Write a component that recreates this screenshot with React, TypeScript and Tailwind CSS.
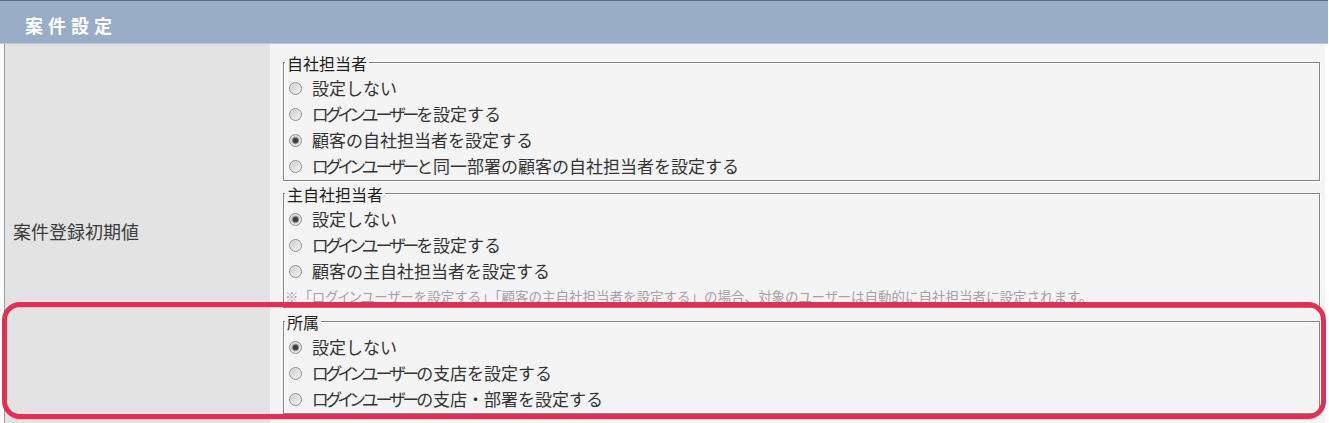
import React from 'react';

type Option = { label: string; checked?: boolean };
type Group = { legend: string; options: Option[]; note?: string; className: string };

// Meiryo-style narrow katakana: only the katakana runs get squeezed (not the ・ dot)
const kana = (text: string, tight: string) =>
    text.split(/([\u30A1-\u30FA\u30FC]+)/).map((part, i) =>
        /[\u30A1-\u30FA\u30FC]/.test(part)
            ? <span key={i} className={tight}>{part}</span>
            : <React.Fragment key={i}>{part}</React.Fragment>
    );

const groups: Group[] = [
    {
        legend: '自社担当者',
        className: 'mt-0',
        options: [
            { label: '設定しない' },
            { label: 'ログインユーザーを設定する' },
            { label: '顧客の自社担当者を設定する', checked: true },
            { label: 'ログインユーザーと同一部署の顧客の自社担当者を設定する' },
        ],
    },
    {
        legend: '主自社担当者',
        className: 'mt-[12px]',
        options: [
            { label: '設定しない', checked: true },
            { label: 'ログインユーザーを設定する' },
            { label: '顧客の主自社担当者を設定する' },
        ],
        note: '※「ログインユーザーを設定する」「顧客の主自社担当者を設定する」の場合、対象のユーザーは自動的に自社担当者に設定されます。',
    },
    {
        legend: '所属',
        className: 'mt-[13px]',
        options: [
            { label: '設定しない', checked: true },
            { label: 'ログインユーザーの支店を設定する' },
            { label: 'ログインユーザーの支店・部署を設定する' },
        ],
    },
];

const Radio = ({ checked }: { checked?: boolean }) => (
    <span className="w-[13px] h-[13px] rounded-full border border-[#8f8f8f] bg-gradient-to-br from-[#c8c8c8] to-[#f8f8f8] shadow-[inset_0_0_0_1px_#e6e6e6] flex items-center justify-center shrink-0">
        {checked && <span className="w-[5px] h-[5px] rounded-full bg-[#3c3c3c] shadow-[0_0_1px_1px_#7a7a7a]" />}
    </span>
);

const renderGroup = (group: Group) => {
    return (
        <div key={group.legend} className={`border border-[#858585] shadow-[1px_1px_0_#ffffff,inset_1px_1px_0_#ffffff] pb-[1px] ${group.className}`}>
            <div className="-mt-[12px] ml-[1px] px-[2px] w-fit bg-[#f4f4f4] leading-[24px] text-[16px] text-[#1e1e1e]">
                {group.legend}
            </div>
            {group.options.map((opt) => (
                <div key={opt.label} className="flex items-center h-[26px] pl-[5px]">
                    <Radio checked={opt.checked} />
                    <span className="ml-[10px] text-[17px] leading-[26px] text-[#333] whitespace-nowrap">
                        {kana(opt.label, "[font-feature-settings:'palt'] tracking-[-3px]")}
                    </span>
                </div>
            ))}
            {group.note && (
                <div className="pl-[1px] pt-[1px] h-[22px] text-[13.5px] leading-[22px] text-[#a3a3a3] whitespace-nowrap">
                    {kana(group.note, "[font-feature-settings:'palt']")}
                </div>
            )}
        </div>
    );
};

export default function App() {
    return (
        <div className="relative w-[1329px] h-[423px] overflow-hidden bg-white font-['Noto_Sans_CJK_JP',sans-serif]">
            <div className="w-[1328px] h-[44px] bg-[#9aadc6] border-t border-[#5d6d80] border-b border-b-[#b9c6d6] flex items-center pl-[25px] pt-[6px]">
                <span className="text-white font-bold text-[18px] tracking-[5px]">案件設定</span>
            </div>

            <div className="ml-[4px] w-[1321px] flex border-l border-[#9c9c9c]">
                <div className="w-[266px] bg-[#e3e3e3] border-r border-[#f7f7f7] flex items-center pl-[8px]">
                    <span className="text-[18px] text-[#3c3c3c] mb-[6px]">案件登録初期値</span>
                </div>
                <div className="flex-1 bg-[#f4f4f4] pl-[12px] pr-[5px] pt-[18px] pb-[10px]">
                    {groups.map(renderGroup)}
                </div>
            </div>

            <div className="absolute left-[2px] top-[302px] w-[1324px] h-[117px] rounded-[18px] border-[5px] border-[#df3151] pointer-events-none" />
        </div>
    );
}
